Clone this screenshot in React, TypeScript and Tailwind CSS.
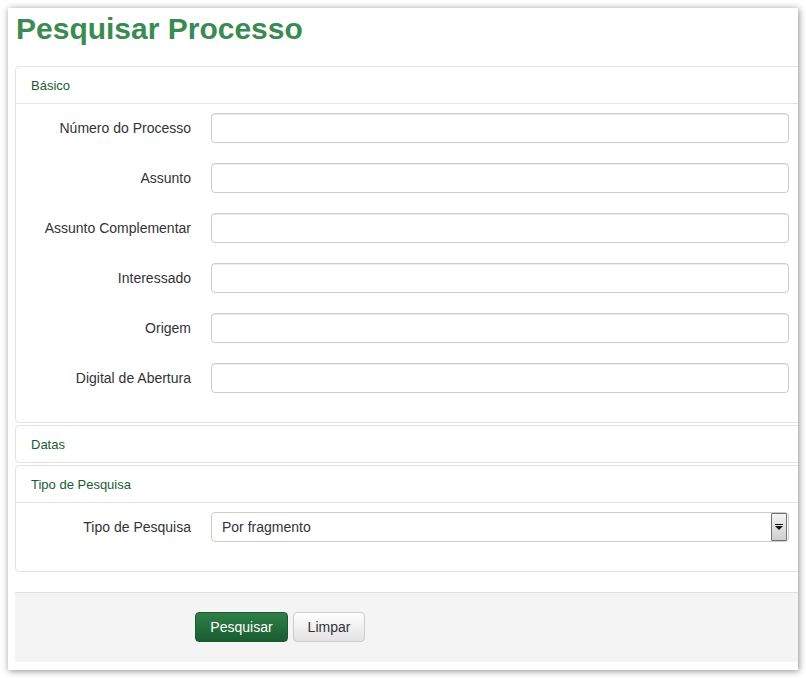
import React from "react";

const labels = [
  "Número do Processo",
  "Assunto",
  "Assunto Complementar",
  "Interessado",
  "Origem",
  "Digital de Abertura",
];

function Row({ label, children }: { label: string; children: React.ReactNode }) {
  return (
    <div className="flex items-center mb-[20px] h-[30px]">
      <label className="w-[175px] text-right text-[14px] text-[#333333] leading-[20px]">{label}</label>
      <div className="ml-[20px] w-[578px] h-[30px]">{children}</div>
    </div>
  );
}

function TextInput() {
  return (
    <input
      type="text"
      className="block w-full h-[30px] border border-[#cccccc] rounded-[4px] bg-white shadow-[inset_0_1px_1px_rgba(0,0,0,0.075)] outline-none px-[10px] text-[14px]"
    />
  );
}

function Select() {
  return (
    <div className="relative w-full h-[30px] border border-[#cccccc] rounded-[4px] bg-white flex items-center pl-[10px] text-[14px] text-[#333333]">
      <span>Por fragmento</span>
      <div className="absolute right-[1px] top-[0px] w-[16px] h-[28px] border border-[#707070] rounded-[1px] bg-gradient-to-b from-[#f4f4f4] to-[#cfcfcf] flex items-center justify-center">
        <svg width="8" height="6" viewBox="0 0 8 6">
          <rect x="0" y="0" width="8" height="1" fill="#111" />
          <polygon points="0,2 8,2 4,6" fill="#111" />
        </svg>
      </div>
    </div>
  );
}

function PanelHeader({ title, border = true }: { title: string; border?: boolean }) {
  return (
    <div
      className={
        "box-content h-[35px] flex items-center pl-[15px] pt-[1px] text-[13px] text-[#1b5b33] " +
        (border ? "border-b border-[#e3e3e3]" : "")
      }
    >
      {title}
    </div>
  );
}

export default function App() {
  return (
    <div className="w-[806px] h-[678px] bg-white pt-[8px] pl-[8px]" style={{ fontFamily: '"Liberation Sans", Arial, sans-serif' }}>
      <div className="w-[790px] h-[662px] bg-white overflow-hidden shadow-[1px_1px_7px_rgba(0,0,0,0.45)] pl-[7px]">
        <div className="h-[58px] pt-[4px] pl-[1px]">
          <h1 className="text-[30px] leading-[33px] font-bold text-[#3b8a52]">Pesquisar Processo</h1>
        </div>

        <div className="w-[800px] border border-[#e3e3e3] rounded-[4px] mb-[2px]">
          <PanelHeader title="Básico" />
          <div className="py-[9px]">
            {labels.map((l) => (
              <Row key={l} label={l}>
                <TextInput />
              </Row>
            ))}
          </div>
        </div>

        <div className="w-[800px] border border-[#e3e3e3] rounded-[4px] mb-[2px]">
          <PanelHeader title="Datas" border={false} />
        </div>

        <div className="w-[800px] border border-[#e3e3e3] rounded-[4px] mb-[20px]">
          <PanelHeader title="Tipo de Pesquisa" />
          <div className="py-[9px]">
            <Row label="Tipo de Pesquisa">
              <Select />
            </Row>
          </div>
        </div>

        <div className="w-[800px] h-[70px] border-t border-[#e0e0e0] bg-[#f4f4f4] pt-[19px] pl-[180px] flex items-start gap-[5px]">
          <button className="w-[93px] h-[30px] rounded-[4px] border border-[#1a5a30] bg-gradient-to-b from-[#2f7f48] to-[#1a5c31] text-white text-[14px]">
            Pesquisar
          </button>
          <button className="w-[72px] h-[30px] rounded-[4px] border border-[#cccccc] bg-gradient-to-b from-white to-[#e2e2e2] text-[#333333] text-[14px]">
            Limpar
          </button>
        </div>
      </div>
    </div>
  );
}
